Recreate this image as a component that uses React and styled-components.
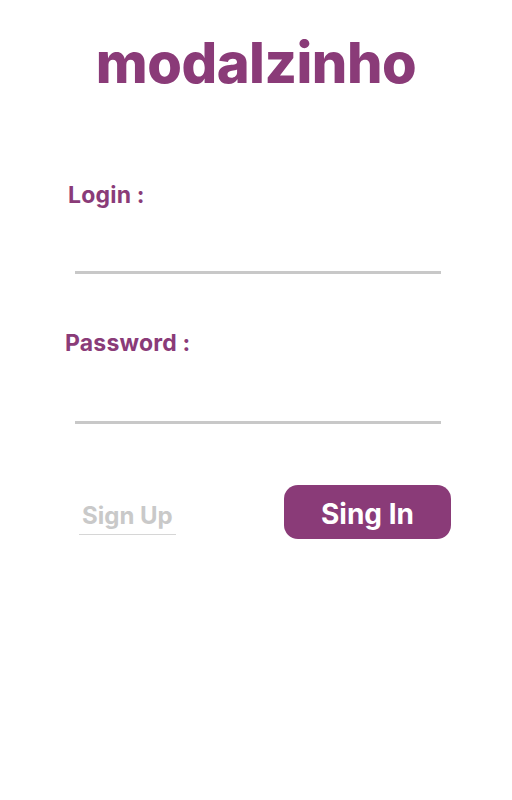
import React from "react";
import styled, { createGlobalStyle } from "styled-components";

const Global = createGlobalStyle`
  html, body { margin: 0; padding: 0; background: #fff; }
  body { font-family: Inter, "Noto Sans", sans-serif; }
`;

const purple = "#8a3b78";

const Page = styled.div`
  width: 512px;
  height: 800px;
  display: flex;
  flex-direction: column;
  box-sizing: border-box;
`;

const Title = styled.h1`
  margin: 28px 0 0 0;
  text-align: center;
  font-family: Inter, sans-serif;
  font-weight: 800;
  font-size: 56px;
  line-height: 70px;
  color: ${purple};
  letter-spacing: -0.5px;
`;

const Form = styled.form`
  display: flex;
  flex-direction: column;
  margin: 0;
`;

const Field = styled.div`
  display: flex;
  flex-direction: column;
  margin-top: ${(p) => p.$top}px;
`;

const Label = styled.label`
  margin-left: ${(p) => p.$left}px;
  font-family: Inter, sans-serif;
  font-weight: 700;
  font-size: 23px;
  line-height: 26px;
  color: ${purple};
  letter-spacing: 0.2px;
`;

const Input = styled.input`
  margin: 0 0 0 75px;
  width: 366px;
  height: 40px;
  border: none;
  border-bottom: 3px solid #c8c8c8;
  outline: none;
  background: transparent;
  padding: 0;
  margin-top: ${(p) => p.$gap}px;
  font-size: 18px;
  font-family: Inter, sans-serif;
`;

const Actions = styled.div`
  display: flex;
  align-items: center;
  justify-content: space-between;
  margin: 61px 61px 0 79px;
`;

const LinkButton = styled.button`
  background: none;
  border: none;
  border-bottom: 1px solid #d6d6d6;
  padding: 2px 3px 4px 3px;
  font-family: Inter, sans-serif;
  font-weight: 700;
  font-size: 24px;
  line-height: 28px;
  color: #c9c9c9;
  margin-top: 11px;
  cursor: pointer;
`;

const Primary = styled.button`
  width: 167px;
  height: 54px;
  border: none;
  border-radius: 14px;
  background: ${purple};
  color: #fff;
  font-family: Inter, sans-serif;
  font-weight: 700;
  font-size: 28px;
  cursor: pointer;
  padding: 3px 0 0 0;
`;

export default function App() {
  return (
    <>
      <Global />
      <Page>
        <Title>modalzinho</Title>
        <Form onSubmit={(e) => e.preventDefault()}>
          <Field $top={84}>
            <Label $left={68}>Login :</Label>
            <Input type="text" $gap={23} />
          </Field>
          <Field $top={56}>
            <Label $left={65}>Password :</Label>
            <Input type="password" $gap={25} />
          </Field>
          <Actions>
            <LinkButton type="button">Sign Up</LinkButton>
            <Primary type="submit">Sing In</Primary>
          </Actions>
        </Form>
      </Page>
    </>
  );
}
